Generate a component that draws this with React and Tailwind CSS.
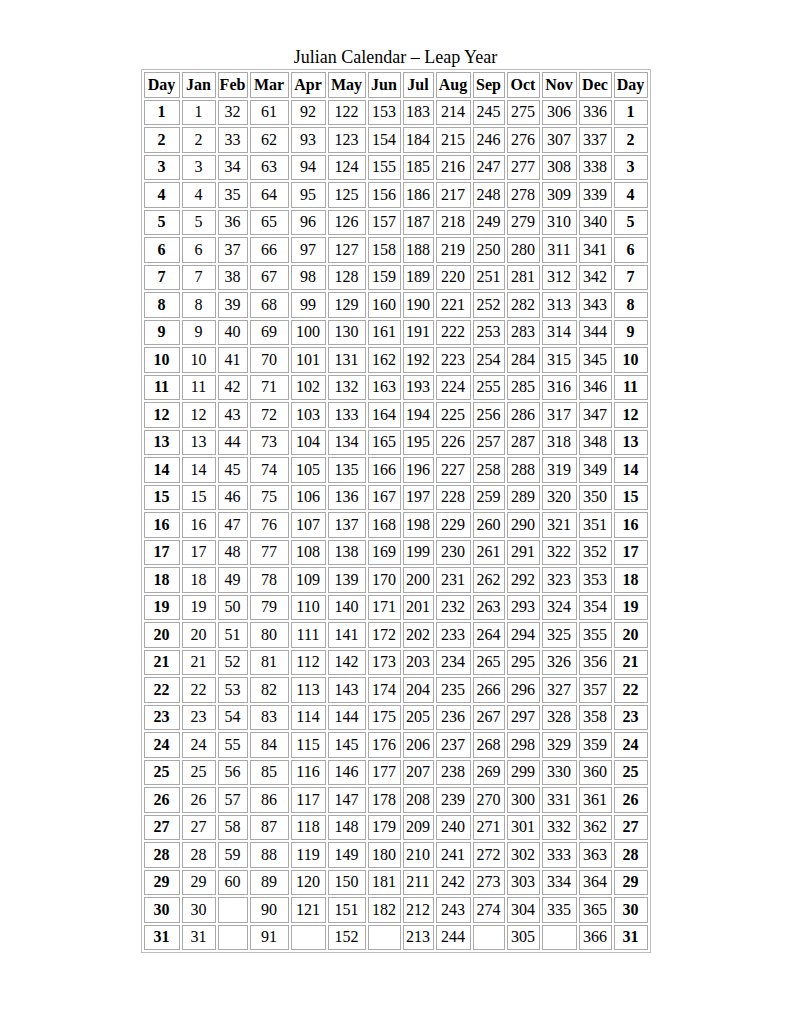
import React from "react";

const months = [
  { name: "Jan", start: 1, days: 31, w: "w-[34px]" },
  { name: "Feb", start: 32, days: 29, w: "w-[30px]" },
  { name: "Mar", start: 61, days: 31, w: "w-[39px]" },
  { name: "Apr", start: 92, days: 30, w: "w-[35px]" },
  { name: "May", start: 122, days: 31, w: "w-[38px]" },
  { name: "Jun", start: 153, days: 30, w: "w-[33px]" },
  { name: "Jul", start: 183, days: 31, w: "w-[31px]" },
  { name: "Aug", start: 214, days: 31, w: "w-[35px]" },
  { name: "Sep", start: 245, days: 30, w: "w-[32px]" },
  { name: "Oct", start: 275, days: 31, w: "w-[33px]" },
  { name: "Nov", start: 306, days: 30, w: "w-[35px]" },
  { name: "Dec", start: 336, days: 31, w: "w-[33px]" },
];

const days = Array.from({ length: 31 }, (_, i) => i + 1);

const cell =
  "border border-[#a9a9a9] h-[25.5px] p-0 text-center align-middle leading-none";

const App = () => {
  return (
    <div className="min-h-[1024px] bg-white text-black font-['Liberation_Serif',serif]">
      <div className="flex flex-col items-center pt-[47px]">
        <div className="h-[20px] leading-[20px] text-[18px] mb-[2px]">
          Julian Calendar – Leap Year
        </div>
        <table className="table-fixed w-[510px] border-separate border-spacing-[2px] border border-[#bdbdbd] text-[16px]">
          <thead>
            <tr>
              <th className={`${cell} w-[36px] font-bold`}>Day</th>
              {months.map((m) => (
                <th key={m.name} className={`${cell} ${m.w} font-bold`}>
                  {m.name}
                </th>
              ))}
              <th className={`${cell} w-[34px] font-bold`}>Day</th>
            </tr>
          </thead>
          <tbody>
            {days.map((d) => (
              <tr key={d}>
                <td className={`${cell} font-bold`}>{d}</td>
                {months.map((m) => (
                  <td key={m.name} className={cell}>
                    {d <= m.days ? m.start + d - 1 : ""}
                  </td>
                ))}
                <td className={`${cell} font-bold`}>{d}</td>
              </tr>
            ))}
          </tbody>
        </table>
      </div>
    </div>
  );
};

export default App;
